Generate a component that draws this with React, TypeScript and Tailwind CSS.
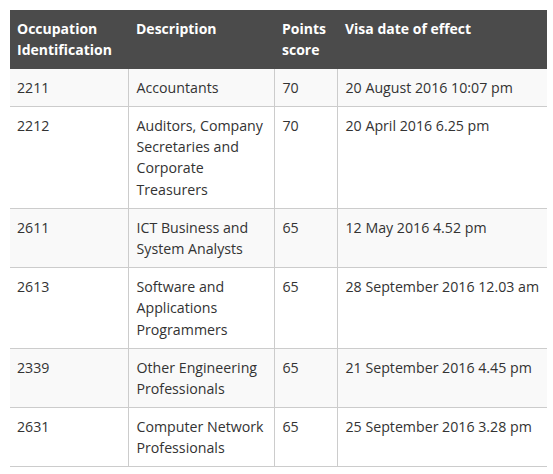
import React from "react";

const rows: [string, string, string, string][] = [
  ["2211", "Accountants", "70", "20 August 2016 10:07 pm"],
  ["2212", "Auditors, Company Secretaries and Corporate Treasurers", "70", "20 April 2016 6.25 pm"],
  ["2611", "ICT Business and System Analysts", "65", "12 May 2016 4.52 pm"],
  ["2613", "Software and Applications Programmers", "65", "28 September 2016 12.03 am"],
  ["2339", "Other Engineering Professionals", "65", "21 September 2016 4.45 pm"],
  ["2631", "Computer Network Professionals", "65", "25 September 2016 3.28 pm"],
];

export default function App() {
  return (
    <div className="bg-white w-[553px] h-[474px] pt-[10px] pl-[10px]" style={{ fontFamily: '"Open Sans", sans-serif' }}>
      <table className="table-fixed border-collapse w-[537px] text-[14px] leading-[21.4px] text-[#333333]">
        <colgroup>
          <col className="w-[118px]" />
          <col className="w-[146px]" />
          <col className="w-[63px]" />
          <col className="w-[210px]" />
        </colgroup>
        <thead>
          <tr className="bg-[#4b4b4b] text-white font-bold text-left align-top">
            <th className="px-[7px] pt-[8px] pb-[8px] font-bold">Occupation Identification</th>
            <th className="px-[8px] pt-[8px] pb-[8px] font-bold">Description</th>
            <th className="px-[8px] pt-[8px] pb-[8px] font-bold">Points score</th>
            <th className="px-[8px] pt-[8px] pb-[8px] font-bold">Visa date of effect</th>
          </tr>
        </thead>
        <tbody className="text-[14.2px] leading-[21.33px]">
          {rows.map((r, i) => (
            <tr key={r[0]} className={`align-top border-b border-[#cccccc] ${i % 2 === 0 ? "bg-[#f9f9f9]" : "bg-white"}`}>
              <td className="px-[7px] pt-[8px] pb-[7.67px]">{r[0]}</td>
              <td className="px-[8px] pt-[8px] pb-[7.67px] border-l border-[#cccccc]">{r[1]}</td>
              <td className="px-[8px] pt-[8px] pb-[7.67px] border-l border-[#cccccc]">{r[2]}</td>
              <td className="pl-[8px] pr-[2px] pt-[8px] pb-[7.67px] border-l border-[#cccccc] whitespace-nowrap">{r[3]}</td>
            </tr>
          ))}
        </tbody>
      </table>
    </div>
  );
}
